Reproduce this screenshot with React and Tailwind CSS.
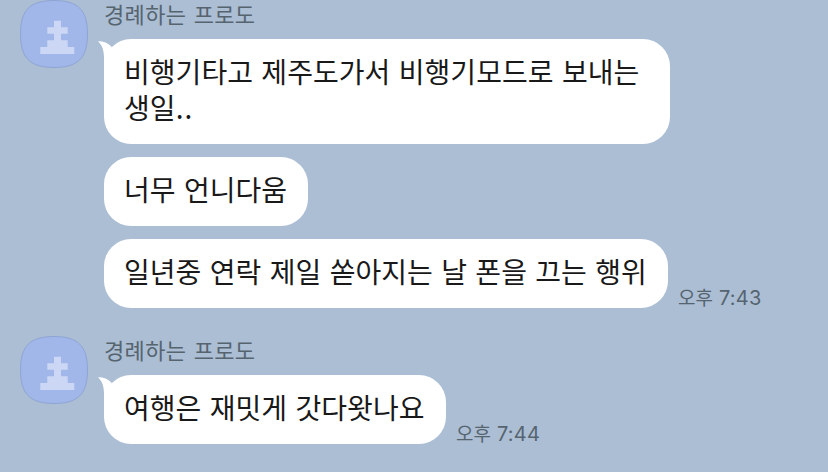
const groups = [
  {
    id: 1,
    sender: "경례하는 프로도",
    time: "7:43",
    messages: [
      ["비행기타고 제주도가서 비행기모드로 보내는", "생일.."],
      ["너무 언니다움"],
      ["일년중 연락 제일 쏟아지는 날 폰을 끄는 행위"],
    ],
    widths: ["w-[566px]", "w-[204px]", "w-[564px]"],
  },
  {
    id: 2,
    sender: "경례하는 프로도",
    time: "7:44",
    messages: [["여행은 재밋게 갓다왓나요"]],
    widths: ["w-[342px]"],
  },
];

const Avatar = () => (
  <svg className="h-[68px] w-[68px] shrink-0" viewBox="0 0 68 68">
    <path
      d="M34 .5C58 .5 67.5 10 67.5 34S58 67.5 34 67.5.5 58 .5 34 10 .5 34 .5Z"
      fill="#a1b6e9"
      stroke="#8fa5d3"
    />
    {/* pixel statue */}
    <path
      d="M34 20.7h7v6.6h6.7v6.5H41v6.5h6.7v6.7h6.6v7h-34v-7h7v-6.7H34v-6.5h-6.7v-6.5H34Z"
      fill="#cbd7f4"
    />
  </svg>
);

// small white tail on the first bubble of a group
const Tail = () => (
  <svg
    className="absolute -left-[6px] top-0 h-[28px] w-[26px]"
    viewBox="0 0 26 28"
  >
    <path d="M0 2.3C5 2.2 10 3.8 13.4 7.6L20 28H6V19C6 12 4.5 6.5 0 2.3Z" fill="#fff" />
  </svg>
);

const Bubble = ({ lines, width, first }) => (
  <div
    className={`relative rounded-[27px] bg-white px-5 pt-[14px] pb-[19px] text-[28px] leading-9 tracking-[0.05px] text-[#191919] [word-spacing:2px] ${width}`}
  >
    {first && <Tail />}
    {lines.map((line) => (
      <p key={line} className="relative whitespace-nowrap">
        {line.replace(/\.+$/, "")}
        {/* trailing dots are set a bit wider */}
        {line.endsWith("..") && <span className="tracking-[1.2px]">..</span>}
      </p>
    ))}
  </div>
);

const MessageGroup = ({ group }) => (
  <section className="flex items-start gap-4">
    <Avatar />
    <div>
      <h2 className="h-[39px] text-[22px] leading-[26px] tracking-[0.35px] text-[#56646f] [word-spacing:2px]">
        {group.sender}
      </h2>
      <div className="flex flex-col gap-[13px]">
        {group.messages.map((lines, i) => (
          <div key={i} className="flex items-end gap-[10px]">
            <Bubble lines={lines} width={group.widths[i]} first={i === 0} />
            {i === group.messages.length - 1 && (
              <time className="flex items-baseline gap-[6px] whitespace-nowrap text-[19px] leading-5 text-[#56646f]">
                <span>오후</span>
                <span className="font-[Inter,sans-serif] text-[20px] tracking-[0.2px]">
                  {group.time}
                </span>
              </time>
            )}
          </div>
        ))}
      </div>
    </div>
  </section>
);

const App = () => {
  return (
    <main className="flex h-[472px] w-[828px] flex-col gap-7 overflow-hidden bg-[#abbed4] pl-5 font-['Noto_Sans_CJK_KR',sans-serif]">
      {groups.map((group) => (
        <MessageGroup key={group.id} group={group} />
      ))}
    </main>
  );
};

export default App;
